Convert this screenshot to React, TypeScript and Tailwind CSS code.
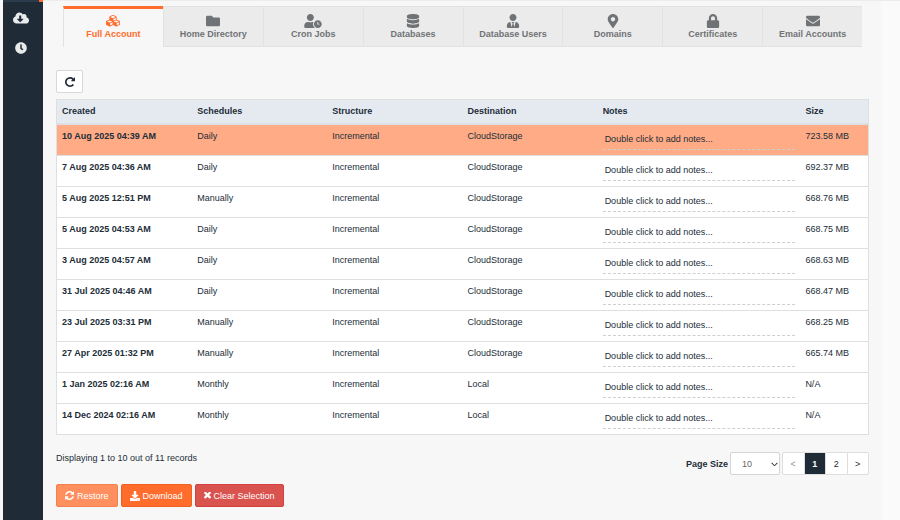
import React, { useState } from 'react';
import {
  FaCloudDownloadAlt,
  FaClock,
  FaFolder,
  FaUserClock,
  FaDatabase,
  FaUserTie,
  FaMapMarkerAlt,
  FaLock,
  FaEnvelope,
  FaDownload,
} from 'react-icons/fa';
import { FaChevronDown } from 'react-icons/fa6';

interface Backup {
  created: string;
  schedule: string;
  destination: string;
  size: string;
}

interface IconProps {
  className?: string;
}

function CubesIcon({ className }: IconProps) {
  return (
    <svg className={className} viewBox="-64 64 2176 1792" fill="currentColor" aria-hidden="true">
      <path d="M576 1665l384-192v-314l-384 164v342zm-64-454l404-173-404-173-404 173zm1088 454l384-192v-314l-384 164v342zm-64-454l404-173-404-173-404 173zm-448-293l384-165v-266l-384 164v267zm-64-379l441-189-441-189-441 189zm1088 518v416q0 36-19 67t-52 47l-448 224q-25 14-57 14t-57-14l-448-224q-5-2-7-4-2 2-7 4l-448 224q-25 14-57 14t-57-14l-448-224q-33-16-52-47t-19-67v-416q0-38 21.5-70t56.5-48l434-186v-400q0-38 21.5-70t56.5-48l448-192q23-10 50-10t50 10l448 192q35 16 56.5 48t21.5 70v400l434 186q36 16 57 48t21 70z" />
    </svg>
  );
}

function RepeatIcon({ className }: IconProps) {
  return (
    <svg className={className} viewBox="128 128 1536 1536" fill="currentColor" aria-hidden="true">
      <path d="M1664 256v448q0 26-19 45t-45 19h-448q-42 0-59-40-17-39 14-69l138-138q-148-137-349-137-104 0-198.5 40.5t-163.5 109.5-109.5 163.5-40.5 198.5 40.5 198.5 109.5 163.5 163.5 109.5 198.5 40.5q119 0 225-52t179-147q7-10 23-12 15 0 25 9l137 138q9 8 9.5 20.5t-7.5 22.5q-109 132-264 204.5t-327 72.5q-156 0-298-61t-245-164-164-245-61-298 61-298 164-245 245-164 298-61q147 0 284.5 55.5t244.5 156.5l130-129q29-31 70-14 39 17 39 59z" />
    </svg>
  );
}

function RestoreIcon({ className }: IconProps) {
  return (
    <svg className={className} viewBox="128 128 1536 1536" fill="currentColor" aria-hidden="true">
      <path d="M1639 1056q0 5-1 7-64 268-268 434.5t-478 166.5q-146 0-282.5-55t-243.5-157l-129 129q-19 19-45 19t-45-19-19-45v-448q0-26 19-45t45-19h448q26 0 45 19t19 45-19 45l-137 137q71 66 161 102t187 36q134 0 250-65t186-179q11-17 53-117 8-23 30-23h192q13 0 22.5 9.5t9.5 22.5zm25-800v448q0 26-19 45t-45 19h-448q-26 0-45-19t-19-45 19-45l138-138q-148-137-349-137-134 0-250 65t-186 179q-11 17-53 117-8 23-30 23h-199q-13 0-22.5-9.5t-9.5-22.5v-7q65-268 270-434.5t480-166.5q146 0 284 55.5t245 156.5l130-129q19-19 45-19t45 19 19 45z" />
    </svg>
  );
}

function ClearIcon({ className }: IconProps) {
  return (
    <svg className={className} viewBox="302 434 1188 1188" fill="currentColor" aria-hidden="true">
      <path d="M1490 1322q0 40-28 68l-136 136q-28 28-68 28t-68-28l-294-294-294 294q-28 28-68 28t-68-28l-136-136q-28-28-28-68t28-68l294-294-294-294q-28-28-28-68t28-68l136-136q28-28 68-28t68 28l294 294 294-294q28-28 68-28t68 28l136 136q28 28 28 68t-28 68l-294 294 294 294q28 28 28 68z" />
    </svg>
  );
}

const tabs = [
  { id: 'full', label: 'Full Account', icon: CubesIcon, iconWidth: 'w-[14px]' },
  { id: 'home', label: 'Home Directory', icon: FaFolder, iconWidth: 'w-[14px]' },
  { id: 'cron', label: 'Cron Jobs', icon: FaUserClock, iconWidth: 'w-[18px]' },
  { id: 'databases', label: 'Databases', icon: FaDatabase, iconWidth: 'w-[14px]' },
  { id: 'dbusers', label: 'Database Users', icon: FaUserTie, iconWidth: 'w-[14px]' },
  { id: 'domains', label: 'Domains', icon: FaMapMarkerAlt, iconWidth: 'w-[14px]' },
  { id: 'certs', label: 'Certificates', icon: FaLock, iconWidth: 'w-[14px]' },
  { id: 'email', label: 'Email Accounts', icon: FaEnvelope, iconWidth: 'w-[14px]' },
];

const backups: Backup[] = [
  { created: '10 Aug 2025 04:39 AM', schedule: 'Daily', destination: 'CloudStorage', size: '723.58 MB' },
  { created: '7 Aug 2025 04:36 AM', schedule: 'Daily', destination: 'CloudStorage', size: '692.37 MB' },
  { created: '5 Aug 2025 12:51 PM', schedule: 'Manually', destination: 'CloudStorage', size: '668.76 MB' },
  { created: '5 Aug 2025 04:53 AM', schedule: 'Daily', destination: 'CloudStorage', size: '668.75 MB' },
  { created: '3 Aug 2025 04:57 AM', schedule: 'Daily', destination: 'CloudStorage', size: '668.63 MB' },
  { created: '31 Jul 2025 04:46 AM', schedule: 'Daily', destination: 'CloudStorage', size: '668.47 MB' },
  { created: '23 Jul 2025 03:31 PM', schedule: 'Manually', destination: 'CloudStorage', size: '668.25 MB' },
  { created: '27 Apr 2025 01:32 PM', schedule: 'Manually', destination: 'CloudStorage', size: '665.74 MB' },
  { created: '1 Jan 2025 02:16 AM', schedule: 'Monthly', destination: 'Local', size: 'N/A' },
  { created: '14 Dec 2024 02:16 AM', schedule: 'Monthly', destination: 'Local', size: 'N/A' },
];

function Sidebar() {
  return (
    <aside className="flex w-10 shrink-0 flex-col bg-[#1f2b37]">
      <div className="flex h-0.5 justify-end bg-[#2c3b4c]">
        <span className="w-1 bg-[#ff6c2c]" />
      </div>
      <nav className="flex flex-col items-center gap-4 pt-2 pr-1 text-[#e9eaec]">
        <a href="#backups" aria-label="Backups">
          <FaCloudDownloadAlt className="h-4 w-4" />
        </a>
        <a href="#schedules" aria-label="Schedules">
          <FaClock className="h-3 w-3" />
        </a>
      </nav>
    </aside>
  );
}

export default function App() {
  const [activeTab, setActiveTab] = useState('full');
  const [selected, setSelected] = useState<number | null>(0);
  const [pageSize, setPageSize] = useState('10');

  return (
    <div className="flex min-h-screen bg-[#f7f7f7] pl-[3px] font-['Liberation_Sans',Arial,sans-serif] text-[9px] leading-3 text-[#222d38]">
      <Sidebar />

      <main className="min-w-0 flex-1 border-t border-[#ececec] px-[13px] pt-[5px]">
        {/* Backup type tabs */}
        <div className="mx-[7px] grid grid-cols-8" role="tablist">
          {tabs.map(({ id, label, icon: Icon, iconWidth }) => (
            <button
              key={id}
              role="tab"
              aria-selected={activeTab === id}
              onClick={() => setActiveTab(id)}
              className={`flex h-[41px] flex-col items-center border-l border-[#e2e2e2] font-bold whitespace-nowrap ${
                activeTab === id
                  ? 'border-t-3 border-t-[#ff6c2c] pt-[5px] text-[#ff6c2c]'
                  : 'border-t border-b bg-[#ebebeb] pt-[7px] text-[#707376]'
              }`}
            >
              <Icon className={`h-[14px] ${iconWidth}`} />
              {label}
            </button>
          ))}
        </div>

        <button
          aria-label="Refresh"
          className="mt-[23px] flex h-[23px] w-[27px] items-center justify-center rounded-xs border border-[#d8d8d8] bg-white"
        >
          <RepeatIcon className="h-[10px] w-[10px]" />
        </button>

        <table className="mt-[6px] w-full table-fixed border-separate border-spacing-0 border border-[#dddfe1] bg-white text-left">
          <colgroup>
            <col className="w-1/6" />
            <col className="w-1/6" />
            <col className="w-1/6" />
            <col className="w-1/6" />
            <col className="w-1/4" />
            <col />
          </colgroup>
          <thead>
            <tr className="h-[25px] bg-[#e5eaf1]">
              {['Created', 'Schedules', 'Structure', 'Destination', 'Notes', 'Size'].map(heading => (
                <th key={heading} className="border-b-2 border-[#dcdfe3] px-[5px] pb-0.5 font-bold">
                  {heading}
                </th>
              ))}
            </tr>
          </thead>
          <tbody>
            {backups.map((backup, index) => (
              <tr
                key={backup.created}
                onClick={() => setSelected(index)}
                className={`h-[31px] cursor-pointer align-top last:h-[30px] [&>td]:border-b [&>td]:border-[#dfdfdf] [&>td]:px-[5px] [&>td]:pt-[5px] last:[&>td]:border-b-0 ${
                  selected === index ? 'bg-[#ffab86]' : 'bg-white'
                }`}
              >
                <td className="font-bold">{backup.created}</td>
                <td>{backup.schedule}</td>
                <td>Incremental</td>
                <td>{backup.destination}</td>
                <td>
                  <div className="h-5 border-b border-dashed border-[#cfcfcf] px-0.5 pt-[3px]">
                    Double click to add notes...
                  </div>
                </td>
                <td>{backup.size}</td>
              </tr>
            ))}
          </tbody>
        </table>

        {/* Footer */}
        <div className="mt-[17px] flex items-start justify-between">
          <p>Displaying 1 to 10 out of 11 records</p>
          <div className="flex h-[23px] items-center">
            <label htmlFor="page-size" className="mr-0.5 font-bold">
              Page Size
            </label>
            <div className="relative mr-0.5">
              <select
                id="page-size"
                value={pageSize}
                onChange={e => setPageSize(e.target.value)}
                className="h-[23px] w-[50px] appearance-none rounded-xs border border-[#d4d4d4] bg-white pl-[11px] text-[#666]"
              >
                <option>10</option>
                <option>25</option>
                <option>50</option>
              </select>
              <FaChevronDown className="pointer-events-none absolute top-2 right-[2px] h-2 w-[7px]" />
            </div>
            <nav
              aria-label="Pagination"
              className="flex h-[23px] w-[87px] divide-x divide-[#dedede] overflow-hidden rounded-xs border border-[#dedede] bg-white"
            >
              <button className="flex-1 text-[#8b8f93]">&lt;</button>
              <button className="flex-1 bg-[#1f2b37] font-bold text-white">1</button>
              <button className="flex-1">2</button>
              <button className="flex-1">&gt;</button>
            </nav>
          </div>
        </div>

        <div className="mt-[9px] flex gap-[3px] text-white">
          <button className="flex h-[23px] items-center gap-[3px] rounded-xs border border-[#f57f4d] bg-[#ff8f5e] px-2">
            <RestoreIcon className="h-[9px] w-[9px]" />
            Restore
          </button>
          <button className="flex h-[23px] items-center gap-[3px] rounded-xs border border-[#f0601f] bg-[#ff6c2c] px-2">
            <FaDownload className="h-[10px] w-[10px]" />
            Download
          </button>
          <button
            onClick={() => setSelected(null)}
            className="flex h-[23px] items-center gap-[3px] rounded-xs border border-[#d2403d] bg-[#d9534f] px-2"
          >
            <ClearIcon className="h-[7px] w-[7px]" />
            Clear Selection
          </button>
        </div>
      </main>

      <div className="w-[18px] shrink-0 border-t border-[#ececec] bg-[#fafafa]" />
    </div>
  );
}
